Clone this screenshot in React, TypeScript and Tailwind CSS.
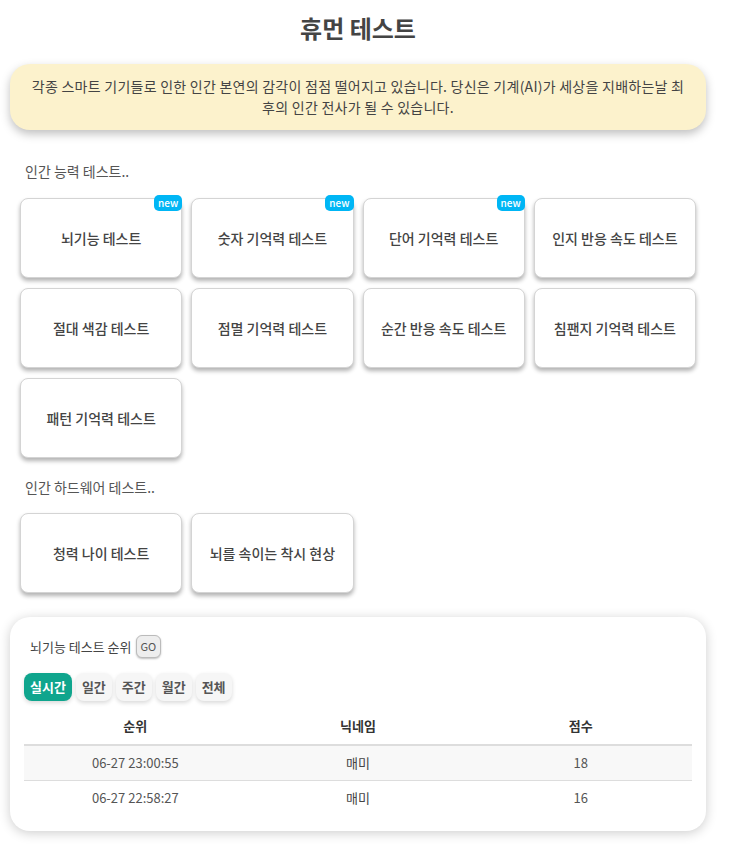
import React, { useState } from "react";

const abilityTests = [
    { name: "뇌기능 테스트", isNew: true },
    { name: "숫자 기억력 테스트", isNew: true },
    { name: "단어 기억력 테스트", isNew: true },
    { name: "인지 반응 속도 테스트", isNew: false },
    { name: "절대 색감 테스트", isNew: false },
    { name: "점멸 기억력 테스트", isNew: false },
    { name: "순간 반응 속도 테스트", isNew: false },
    { name: "침팬지 기억력 테스트", isNew: false },
    { name: "패턴 기억력 테스트", isNew: false },
];

const hardwareTests = [
    { name: "청력 나이 테스트", isNew: false },
    { name: "뇌를 속이는 착시 현상", isNew: false },
];

const tabs = ["실시간", "일간", "주간", "월간", "전체"];

const rankings = [
    { date: "06-27 23:00:55", nick: "매미", score: 18 },
    { date: "06-27 22:58:27", nick: "매미", score: 16 },
];

const TestCard = ({ test }: any) => {
    return (
        <button className="relative h-[80px] rounded-lg border border-[#d4d4d4] bg-white shadow-[0_3px_4px_rgba(0,0,0,0.3)] text-[14px] font-medium text-[#444] cursor-pointer">
            {test.isNew && (
                <span className="absolute -top-[4px] -right-[1px] rounded-[5px] bg-[#00b6f5] px-[4px] text-[10px] leading-[16px] text-white">
                    new
                </span>
            )}
            {test.name}
        </button>
    );
};

const App = () => {
    const [tab, setTab] = useState<number>(0);

    return (
        <div
            className="w-[716px] bg-white pb-[14px] text-[#444]"
            style={{ fontFamily: '"Noto Sans CJK KR", "Noto Sans", sans-serif' }}
        >
            <h1 className="pt-[10px] text-center text-[24px] font-bold leading-[36px] text-[#444]">휴먼 테스트</h1>
            <div className="mx-[10px] mt-[18px] rounded-[20px] bg-[#fcf2cc] px-[16px] py-[12px] text-center text-[14px] leading-[21px] tracking-[0.25px] text-[#444] shadow-[0_4px_10px_rgba(0,0,0,0.25)]">
                각종 스마트 기기들로 인한 인간 본연의 감각이 점점 떨어지고 있습니다. 당신은 기계(AI)가 세상을 지배하는날 최
                후의 인간 전사가 될 수 있습니다.
            </div>

            <p className="mt-[31px] pl-[25px] text-[14px] leading-[20px] text-[#555]">인간 능력 테스트..</p>
            <div className="mt-[17px] grid grid-cols-4 gap-x-[9px] gap-y-[10px] px-[20px]">
                {abilityTests.map((t, i) => (
                    <TestCard key={i} test={t} />
                ))}
            </div>

            <p className="mt-[19px] pl-[25px] text-[14px] leading-[20px] text-[#555]">인간 하드웨어 테스트..</p>
            <div className="mt-[16px] grid grid-cols-4 gap-x-[9px] px-[20px]">
                {hardwareTests.map((t, i) => (
                    <TestCard key={i} test={t} />
                ))}
            </div>

            <div className="mx-[10px] mt-[24px] rounded-[20px] bg-white px-[14px] pt-[18px] pb-[16px] shadow-[0_2px_12px_rgba(0,0,0,0.2)]">
                <div className="flex items-center gap-[4px] pl-[6px] text-[13px] text-[#444]">
                    <span>뇌기능 테스트 순위</span>
                    <button className="h-[23px] rounded-[6px] border border-[#bbb] bg-[#eee] px-[4px] text-[11px] text-[#555] shadow-[0_1px_2px_rgba(0,0,0,0.25)]">
                        GO
                    </button>
                </div>
                <div className="mt-[15px] flex gap-[4px]">
                    {tabs.map((t, i) => (
                        <button
                            key={t}
                            onClick={() => setTab(i)}
                            className={`h-[28px] rounded-[8px] px-[6px] text-[13px] font-bold shadow-[0_2px_4px_rgba(0,0,0,0.15)] ${
                                tab === i ? "bg-[#0fa58d] text-white" : "bg-[#f6f6f6] text-[#555]"
                            }`}
                        >
                            {t}
                        </button>
                    ))}
                </div>
                <table className="mt-[6px] w-full table-fixed text-[13px] text-[#444]">
                    <thead>
                        <tr className="border-b-2 border-[#ddd]">
                            <th className="h-[38px] font-bold text-[#333]">순위</th>
                            <th className="font-bold text-[#333]">닉네임</th>
                            <th className="font-bold text-[#333]">점수</th>
                        </tr>
                    </thead>
                    <tbody>
                        {rankings.map((r, i) => (
                            <tr key={i} className={`border-b border-[#ddd] last:border-b-0 ${i % 2 === 0 ? "bg-[#f8f8f8]" : ""}`}>
                                <td className="h-[35px] text-center text-[#555]">{r.date}</td>
                                <td className="text-center">{r.nick}</td>
                                <td className="text-center text-[#555]">{r.score}</td>
                            </tr>
                        ))}
                    </tbody>
                </table>
            </div>
        </div>
    );
};

export default App;
